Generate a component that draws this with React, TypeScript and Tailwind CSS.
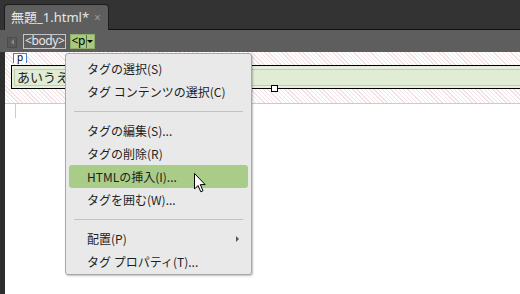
import React from "react";

const menu: ({ label: string; active?: boolean; sub?: boolean } | "sep")[] = [
  { label: "タグの選択(S)" },
  { label: "タグ コンテンツの選択(C)" },
  "sep",
  { label: "タグの編集(S)..." },
  { label: "タグの削除(R)" },
  { label: "HTMLの挿入(I)...", active: true },
  { label: "タグを囲む(W)..." },
  "sep",
  { label: "配置(P)", sub: true },
  { label: "タグ プロパティ(T)..." },
];

const hatch =
  "bg-[repeating-linear-gradient(45deg,#f2e2e4_0px,#f2e2e4_1px,#ffffff_1px,#ffffff_3px)]";

export default function App() {
  return (
    <div
      className="relative flex h-[294px] w-[520px] flex-col overflow-hidden bg-[#333333]"
      style={{ fontFamily: '"Noto Sans", "Noto Sans CJK JP", sans-serif' }}
    >
      {/* tab strip */}
      <div className="flex h-[30px] shrink-0 items-end pl-[4px]">
        <div className="flex h-[26px] items-center gap-[5px] rounded-t-[4px] border border-b-0 border-[#1c1c1c] bg-[#5e5e5e] pl-[6px] pr-[7px]">
          <span className="text-[13px] leading-none text-[#e6e6e6]">無題_1.html*</span>
          <span className="text-[12px] leading-none text-[#9a9a9a]">×</span>
        </div>
        <div className="h-full flex-1 border-b border-[#111111]" />
      </div>

      {/* tag selector */}
      <div className="flex h-[22px] shrink-0 items-center bg-[#5e5e5e] pl-[7px]">
        <div className="mt-[2px] flex h-[11px] w-[10px] items-center justify-center border border-[#4c4c4c] bg-[#585858]">
          <div className="h-0 w-0 border-y-[3px] border-r-[3px] border-y-transparent border-r-[#8a8a8a]" />
        </div>
        <div className="ml-[6px] flex h-[15px] items-center border border-[#c4c4c4] px-[1px] text-[12px] leading-none tracking-[-0.4px] text-[#e8e8e8]">
          &lt;body&gt;
        </div>
        <div className="ml-[4px] flex h-[15px] items-center border border-[#8fae6a] bg-[#a9c982] text-[12px] leading-none tracking-[-0.4px] text-black">
          <span className="pr-[1px]">&lt;p</span>
          <div className="flex h-full w-[8px] items-center justify-center border-l border-[#5d7443]">
            <div className="h-0 w-0 border-x-[3px] border-t-[3px] border-x-transparent border-t-black" />
          </div>
        </div>
      </div>

      {/* design view */}
      <div className="flex flex-1">
        <div className="w-[5px] shrink-0 bg-[#2e2e2e]" />
        <div className="flex flex-1 flex-col bg-white">
          <div className={`h-[52px] border-b border-[#dcc3c7] ${hatch}`}>
            <div className="ml-[8px] mt-[1px] flex h-[10px] w-[14px] items-end justify-center border-x border-t border-[#4b7bd1] bg-white pb-[1px] text-[10px] leading-none text-black">
              p
            </div>
            <div className="relative ml-[6px] mt-[2px] h-[24px] border-y border-l border-black bg-[#e6efdc] pl-[2px] pt-[3px]">
              <div className="flex h-[17px] items-center border-y border-l border-[#c4ceab] bg-[#e0ecd3] pl-[2px] text-[13px] leading-none text-[#222222]">
                あいうえお
              </div>
              <div className="absolute left-[259px] top-[19px] h-[7px] w-[7px] border border-black bg-white" />
            </div>
          </div>
          <div className="ml-[10px] h-[14px] border-l border-[#dcc3c7]" />
        </div>
      </div>

      {/* context menu */}
      <div
        className="absolute left-[65px] top-[53px] w-[187px] rounded-[3px] border border-[#a9a9a9] bg-[#e9e9e9] px-[3px] pb-[1px] pt-[3px] shadow-[1px_1px_2px_rgba(0,0,0,0.25)]"
        style={{ fontFamily: '"Noto Sans CJK JP", sans-serif' }}
      >
        {menu.map((m, i) =>
          m === "sep" ? (
            <div key={i} className="flex h-[16px] items-center px-[5px]">
              <div className="h-px flex-1 bg-[#c2c2c2]" />
            </div>
          ) : (
            <div
              key={i}
              className={`flex h-[23px] items-center justify-between rounded-[3px] pl-[18px] pr-[9px] text-[12px] leading-none text-[#1e1e1e] ${
                m.active ? "bg-[#a9cc88]" : ""
              }`}
            >
              <span>{m.label}</span>
              {m.sub && (
                <div className="h-0 w-0 border-y-[3px] border-l-[3px] border-y-transparent border-l-[#555555]" />
              )}
            </div>
          )
        )}
      </div>

      {/* mouse pointer */}
      <svg
        className="absolute left-[194px] top-[173px]"
        width="13"
        height="20"
        viewBox="0 0 13 20"
      >
        <path
          d="M0.5 0.5 L0.5 16 L4 12.5 L6.8 18.8 L9 17.8 L6.3 11.6 L11.2 11.6 Z"
          fill="white"
          stroke="black"
          strokeWidth="1"
          strokeLinejoin="miter"
        />
      </svg>
    </div>
  );
}
